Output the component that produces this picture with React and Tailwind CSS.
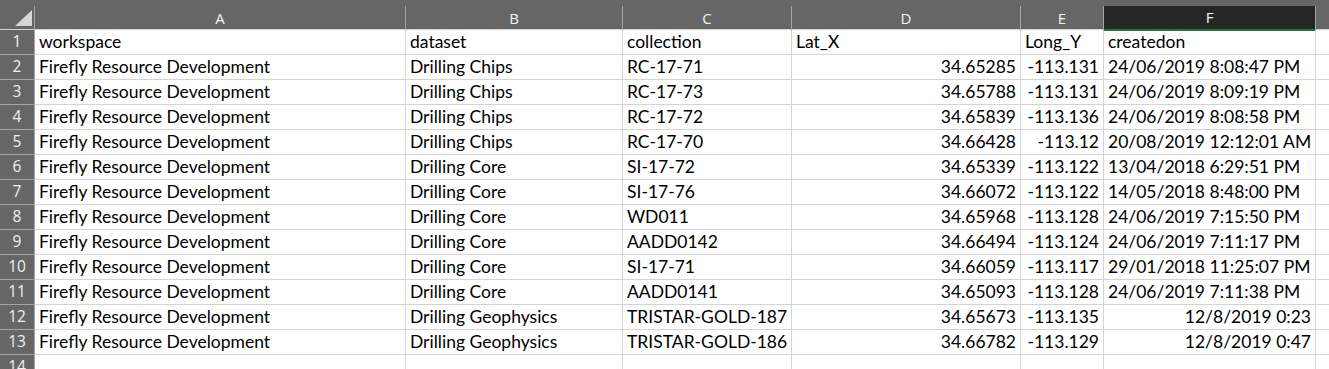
import React from 'react';

const cols = ['A', 'B', 'C', 'D', 'E', 'F'];

const rows = [
  ['workspace', 'dataset', 'collection', 'Lat_X', 'Long_Y', 'createdon'],
  ['Firefly Resource Development', 'Drilling Chips', 'RC-17-71', '34.65285', '-113.131', '24/06/2019 8:08:47 PM'],
  ['Firefly Resource Development', 'Drilling Chips', 'RC-17-73', '34.65788', '-113.131', '24/06/2019 8:09:19 PM'],
  ['Firefly Resource Development', 'Drilling Chips', 'RC-17-72', '34.65839', '-113.136', '24/06/2019 8:08:58 PM'],
  ['Firefly Resource Development', 'Drilling Chips', 'RC-17-70', '34.66428', '-113.12', '20/08/2019 12:12:01 AM'],
  ['Firefly Resource Development', 'Drilling Core', 'SI-17-72', '34.65339', '-113.122', '13/04/2018 6:29:51 PM'],
  ['Firefly Resource Development', 'Drilling Core', 'SI-17-76', '34.66072', '-113.122', '14/05/2018 8:48:00 PM'],
  ['Firefly Resource Development', 'Drilling Core', 'WD011', '34.65968', '-113.128', '24/06/2019 7:15:50 PM'],
  ['Firefly Resource Development', 'Drilling Core', 'AADD0142', '34.66494', '-113.124', '24/06/2019 7:11:17 PM'],
  ['Firefly Resource Development', 'Drilling Core', 'SI-17-71', '34.66059', '-113.117', '29/01/2018 11:25:07 PM'],
  ['Firefly Resource Development', 'Drilling Core', 'AADD0141', '34.65093', '-113.128', '24/06/2019 7:11:38 PM'],
  ['Firefly Resource Development', 'Drilling Geophysics', 'TRISTAR-GOLD-187', '34.65673', '-113.135', '12/8/2019 0:23'],
  ['Firefly Resource Development', 'Drilling Geophysics', 'TRISTAR-GOLD-186', '34.66782', '-113.129', '12/8/2019 0:47'],
  ['', '', '', '', '', ''],
];

const gridCols = 'grid grid-cols-[35px_371px_217px_169px_229px_83px_212px_1fr]';

function Cell({ value, rowIdx, colIdx }) {
  // numbers and the short date format sit to the right, like Excel does
  const right = rowIdx > 0 && (colIdx === 3 || colIdx === 4 || (colIdx === 5 && /^\d+\/\d+\/\d+ \d+:\d+$/.test(value)));
  return (
    <div
      className={`h-[25px] border-r border-b border-[#d4d4d4] flex items-center px-[4px] whitespace-nowrap overflow-visible ${
        right ? 'justify-end' : 'justify-start'
      }`}
    >
      {value}
    </div>
  );
}

export default function App() {
  return (
    <div className="w-[1329px] h-[369px] overflow-hidden bg-white text-black font-['Lato',sans-serif] text-[17.5px]">
      <div className="h-[6px] bg-[#666666]" />
      <div className={`${gridCols} h-[24px] bg-[#666666] border-b border-[#d4d4d4] text-[#f3f3f3] font-['Open_Sans',sans-serif] text-[15px]`}>
        <div className="relative border-r border-[#a6a6a6]">
          <svg className="absolute left-[15px] top-[4px]" width="18" height="17" viewBox="0 0 18 17">
            <polygon points="17,0 17,16 0,16" fill="#d6d6d6" />
          </svg>
        </div>
        {cols.map((c) =>
          c === 'F' ? (
            <div key={c} className="flex items-center justify-center bg-[#262626] border-r border-[#a6a6a6] border-b-2 border-b-[#217346] -mb-px">
              {c}
            </div>
          ) : (
            <div key={c} className="flex items-center justify-center border-r border-[#a6a6a6]">
              {c}
            </div>
          )
        )}
        <div />
      </div>
      {rows.map((r, i) => (
        <div key={i} className={gridCols}>
          <div className="h-[25px] bg-[#666666] border-r border-b border-r-[#a6a6a6] border-b-[#a6a6a6] flex items-center justify-center text-[#f0f0f0] font-['Open_Sans',sans-serif] text-[15.5px]">
            {i + 1}
          </div>
          {r.map((v, j) => (
            <Cell key={j} value={v} rowIdx={i} colIdx={j} />
          ))}
          <div className="h-[25px] border-b border-[#d4d4d4]" />
        </div>
      ))}
    </div>
  );
}
